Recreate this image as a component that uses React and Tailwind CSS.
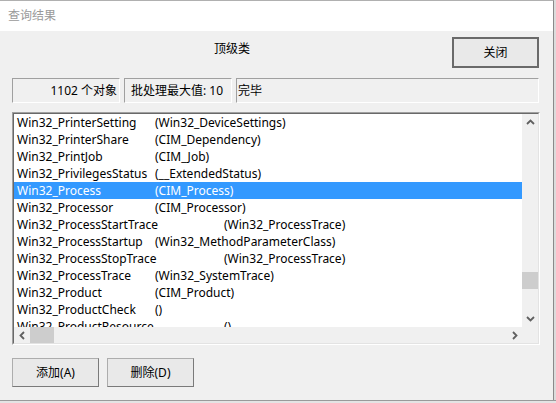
import React from 'react';

const rows = [
  { name: 'Win32_PrinterSetting', parent: '(Win32_DeviceSettings)' },
  { name: 'Win32_PrinterShare', parent: '(CIM_Dependency)' },
  { name: 'Win32_PrintJob', parent: '(CIM_Job)' },
  { name: 'Win32_PrivilegesStatus', parent: '(__ExtendedStatus)' },
  { name: 'Win32_Process', parent: '(CIM_Process)', selected: true },
  { name: 'Win32_Processor', parent: '(CIM_Processor)' },
  { name: 'Win32_ProcessStartTrace', parent: '(Win32_ProcessTrace)', wide: true },
  { name: 'Win32_ProcessStartup', parent: '(Win32_MethodParameterClass)' },
  { name: 'Win32_ProcessStopTrace', parent: '(Win32_ProcessTrace)', wide: true },
  { name: 'Win32_ProcessTrace', parent: '(Win32_SystemTrace)' },
  { name: 'Win32_Product', parent: '(CIM_Product)' },
  { name: 'Win32_ProductCheck', parent: '()' },
  { name: 'Win32_ProductResource', parent: '()', wide: true },
];

const font = { fontFamily: '"Noto Sans", "Noto Sans CJK SC", sans-serif' };

const Chevron = ({ dir }) => {
  const paths = {
    up: 'M1 6 L4.5 2.5 L8 6',
    down: 'M1 3 L4.5 6.5 L8 3',
    left: 'M6 1 L2.5 4.5 L6 8',
    right: 'M3 1 L6.5 4.5 L3 8',
  };
  return (
    <svg width="9" height="9" viewBox="0 0 9 9">
      <path d={paths[dir]} fill="none" stroke="#606060" strokeWidth="1.8" />
    </svg>
  );
};

const Panel = ({ className, children }) => (
  <div
    className={`h-[25px] flex items-center border border-t-[#a0a0a0] border-l-[#a0a0a0] border-b-white border-r-white text-[12px] text-black ${className}`}
  >
    {children}
  </div>
);

const Button = ({ children, className = '' }) => (
  <button
    className={`h-[29px] w-[87px] flex items-center justify-center bg-[#e9e9e9] border border-[#adadad] border-b-[#7a7a7a] border-r-[#7a7a7a] text-[12px] text-black ${className}`}
  >
    {children}
  </button>
);

export default function App() {
  return (
    <div className="w-[556px] h-[403px] bg-[#dcdcdc] overflow-hidden" style={font}>
      <div className="w-[554px] h-[400px] flex flex-col bg-[#f0f0f0] border-t border-r border-t-[#b0b0b0] border-r-[#8a8a8a]">
        {/* Title bar */}
        <div className="h-[30px] bg-white flex items-center pl-[8px] text-[12px] text-[#9a9a9a]">
          查询结果
        </div>

        <div className="flex flex-col pl-[12px] pr-[14px]">
          {/* Header row */}
          <div className="mt-[6px] flex items-start">
            <div className="flex-1 text-center text-[12px] text-black pt-[3px]">顶级类</div>
            <button className="w-[87px] h-[31px] flex items-center justify-center bg-[#e9e9e9] border-2 border-[#6a6a6a] text-[12px] text-black">
              关闭
            </button>
          </div>

          {/* Status bar */}
          <div className="mt-[10px] flex gap-[4px]">
            <Panel className="w-[108px] justify-end pr-[2px]">1102 个对象</Panel>
            <Panel className="w-[108px] pl-[6px]">批处理最大值: 10</Panel>
            <Panel className="flex-1 pl-[1px]">完毕</Panel>
          </div>

          {/* List box */}
          <div className="mt-[9px] h-[233px] w-[528px] border border-t-[#a0a0a0] border-l-[#a0a0a0] border-b-white border-r-white">
            <div className="h-full border border-t-[#696969] border-l-[#696969] border-b-[#e3e3e3] border-r-[#e3e3e3] bg-white flex flex-col">
              <div className="flex flex-1 min-h-0">
                <div className="flex-1 overflow-hidden">
                  {rows.map((r) => (
                    <div
                      key={r.name}
                      className={`h-[17px] flex items-center pl-[3px] text-[12px] whitespace-nowrap ${
                        r.selected ? 'bg-[#3399ff] text-white' : 'text-black'
                      }`}
                    >
                      <span className={r.wide ? 'w-[207px] shrink-0' : 'w-[138px] shrink-0'}>{r.name}</span>
                      <span>{r.parent}</span>
                    </div>
                  ))}
                </div>
                {/* vertical scrollbar */}
                <div className="w-[16px] bg-[#f0f0f0] flex flex-col items-center">
                  <div className="h-[17px] flex items-center justify-center">
                    <Chevron dir="up" />
                  </div>
                  <div className="flex-1 w-full pt-[141px]">
                    <div className="h-[17px] w-full bg-[#cdcdcd]" />
                  </div>
                  <div className="h-[17px] flex items-center justify-center">
                    <Chevron dir="down" />
                  </div>
                </div>
              </div>
              {/* horizontal scrollbar */}
              <div className="h-[16px] bg-[#f0f0f0] flex items-center">
                <div className="w-[16px] flex items-center justify-center">
                  <Chevron dir="left" />
                </div>
                <div className="flex-1 h-full">
                  <div className="h-full w-[24px] bg-[#cdcdcd]" />
                </div>
                <div className="w-[16px] flex items-center justify-center">
                  <Chevron dir="right" />
                </div>
                <div className="w-[16px] h-full bg-[#f0f0f0]" />
              </div>
            </div>
          </div>

          {/* Bottom buttons */}
          <div className="mt-[13px] flex gap-[8px]">
            <Button>添加(A)</Button>
            <Button>删除(D)</Button>
          </div>
        </div>
      </div>
      <div className="h-[3px] bg-[#e4e4e4] border-t border-[#9a9a9a]" />
    </div>
  );
}
